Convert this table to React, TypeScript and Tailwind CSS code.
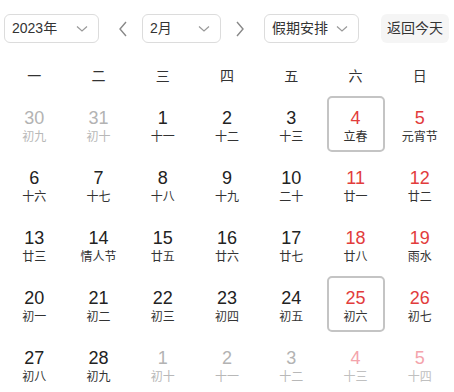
import React from "react";

type Cell = { d: string; l: string; kind: "cur" | "red" | "gray" | "lred"; box?: boolean };

const rows: Cell[][] = [
  [
    { d: "30", l: "初九", kind: "gray" },
    { d: "31", l: "初十", kind: "gray" },
    { d: "1", l: "十一", kind: "cur" },
    { d: "2", l: "十二", kind: "cur" },
    { d: "3", l: "十三", kind: "cur" },
    { d: "4", l: "立春", kind: "red", box: true },
    { d: "5", l: "元宵节", kind: "red" },
  ],
  [
    { d: "6", l: "十六", kind: "cur" },
    { d: "7", l: "十七", kind: "cur" },
    { d: "8", l: "十八", kind: "cur" },
    { d: "9", l: "十九", kind: "cur" },
    { d: "10", l: "二十", kind: "cur" },
    { d: "11", l: "廿一", kind: "red" },
    { d: "12", l: "廿二", kind: "red" },
  ],
  [
    { d: "13", l: "廿三", kind: "cur" },
    { d: "14", l: "情人节", kind: "cur" },
    { d: "15", l: "廿五", kind: "cur" },
    { d: "16", l: "廿六", kind: "cur" },
    { d: "17", l: "廿七", kind: "cur" },
    { d: "18", l: "廿八", kind: "red" },
    { d: "19", l: "雨水", kind: "red" },
  ],
  [
    { d: "20", l: "初一", kind: "cur" },
    { d: "21", l: "初二", kind: "cur" },
    { d: "22", l: "初三", kind: "cur" },
    { d: "23", l: "初四", kind: "cur" },
    { d: "24", l: "初五", kind: "cur" },
    { d: "25", l: "初六", kind: "red", box: true },
    { d: "26", l: "初七", kind: "red" },
  ],
  [
    { d: "27", l: "初八", kind: "cur" },
    { d: "28", l: "初九", kind: "cur" },
    { d: "1", l: "初十", kind: "gray" },
    { d: "2", l: "十一", kind: "gray" },
    { d: "3", l: "十二", kind: "gray" },
    { d: "4", l: "十三", kind: "lred" },
    { d: "5", l: "十四", kind: "lred" },
  ],
];

const Down = () => (
  <svg width="12" height="8" viewBox="0 0 12 8" fill="none">
    <polyline points="1,1.5 6,6 11,1.5" stroke="#999" strokeWidth="1.2" />
  </svg>
);

const Left = () => (
  <svg width="10" height="16" viewBox="0 0 10 16" fill="none">
    <polyline points="8,1 2,8 8,15" stroke="#888" strokeWidth="1.4" />
  </svg>
);

const Right = () => (
  <svg width="10" height="16" viewBox="0 0 10 16" fill="none">
    <polyline points="2,1 8,8 2,15" stroke="#888" strokeWidth="1.4" />
  </svg>
);

const numColor: Record<Cell["kind"], string> = {
  cur: "text-[#222222]",
  red: "text-[#e23c3c]",
  gray: "text-[#b3b3b3]",
  lred: "text-[#f4a4ac]",
};
const lunColor: Record<Cell["kind"], string> = {
  cur: "text-[#333333]",
  red: "text-[#333333]",
  gray: "text-[#b8b8b8]",
  lred: "text-[#c0c0c0]",
};

export default function App() {
  return (
    <div
      className="w-[454px] h-[392px] bg-white overflow-hidden"
      style={{ fontFamily: '"Liberation Sans", "Noto Sans CJK SC", sans-serif' }}
    >
      <div className="flex items-center pt-[14px] h-[43px]">
        <div className="ml-[4px] w-[95px] h-[29px] border border-[#dcdcdc] rounded-[6px] flex items-center justify-between pl-[7px] pr-[10px] text-[14px] text-[#333]">
          <span>2023年</span>
          <Down />
        </div>
        <div className="ml-[19px] w-[10px] flex justify-center"><Left /></div>
        <div className="ml-[14px] w-[79px] h-[29px] border border-[#dcdcdc] rounded-[6px] flex items-center justify-between pl-[7px] pr-[10px] text-[14px] text-[#333]">
          <span>2月</span>
          <Down />
        </div>
        <div className="ml-[14px] w-[10px] flex justify-center"><Right /></div>
        <div className="ml-[19px] w-[95px] h-[29px] border border-[#dcdcdc] rounded-[6px] flex items-center justify-between pl-[7px] pr-[10px] text-[14px] text-[#333]">
          <span>假期安排</span>
          <Down />
        </div>
        <div className="ml-[22px] w-[68px] h-[29px] rounded-[6px] bg-[#f5f5f5] flex items-center justify-center text-[14px] text-[#333]">
          返回今天
        </div>
      </div>
      <div className="px-[2px]">
        <div className="grid grid-cols-7 mt-[13px] h-[40px] items-center text-[14px] text-[#333]">
          {["一", "二", "三", "四", "五", "六", "日"].map((w) => (
            <div key={w} className="text-center">{w}</div>
          ))}
        </div>
        <div className="flex flex-col gap-y-[4px]">
          {rows.map((r, i) => (
            <div key={i} className="grid grid-cols-7">
              {r.map((c, j) => (
                <div key={j} className="flex justify-center">
                  <div
                    className={`w-[58px] h-[56px] flex flex-col items-center pt-[10px] rounded-[5px] ${
                      c.box ? "border-2 border-[#c4c4c4]" : "border-2 border-transparent"
                    }`}
                  >
                    <div className={`text-[18px] leading-[20px] ${numColor[c.kind]}`}>{c.d}</div>
                    <div className={`text-[12px] leading-[16px] mt-[1px] ${lunColor[c.kind]}`}>{c.l}</div>
                  </div>
                </div>
              ))}
            </div>
          ))}
        </div>
      </div>
    </div>
  );
}
